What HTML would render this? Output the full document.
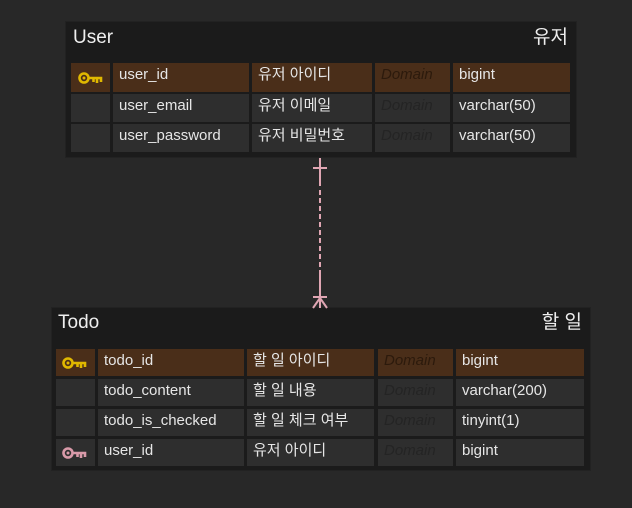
<!DOCTYPE html>
<html><head><meta charset="utf-8"><style>
body{margin:0;width:632px;height:508px;background:#282828;position:relative;overflow:hidden;font-family:"Liberation Sans","Noto Sans CJK KR",sans-serif;color:#e6e6e6}
.t{position:absolute;background:#1b1b1b;box-shadow:0 0 0 1px #222}
.h{position:absolute;font-size:19px;line-height:22px;color:#eee}
.c{position:absolute;background:#2e2e2e;font-size:15px;line-height:24px;padding-left:6px;box-sizing:border-box;white-space:nowrap;overflow:hidden}
.pk{background:#4a2e19}
.d{color:#242424;font-style:italic}
.pk.d{color:#2c1a0c}
</style></head><body>
<div class="t" style="left:66px;top:22px;width:510px;height:135px">
<div class="h" style="left:7px;top:5px">User</div>
<div class="h" style="right:8px;top:5px">유저</div>
</div>
<div class="t" style="left:52px;top:308px;width:538px;height:162px">
<div class="h" style="left:6px;top:4px">Todo</div>
<div class="h" style="right:8px;top:4px">할 일</div>
</div>
<svg style="position:absolute;left:0;top:0" width="632" height="508">
<g stroke="#e0a6b3" stroke-width="2" fill="none">
<line x1="320" y1="158" x2="320" y2="186"/>
<line x1="313" y1="168" x2="327" y2="168"/>
<line x1="320" y1="190" x2="320" y2="272" stroke-dasharray="5,3"/>
<line x1="320" y1="272" x2="320" y2="308"/>
<line x1="313" y1="297" x2="327" y2="297"/>
<line x1="320" y1="298" x2="313" y2="308"/><line x1="320" y1="298" x2="327" y2="308"/>
</g>
</svg>
<div class="c pk" style="left:71px;top:63px;width:39px;height:29px"></div>
<div class="c pk" style="left:113px;top:63px;width:136px;height:29px">user_id</div>
<div class="c pk" style="left:252px;top:63px;width:120px;height:29px">유저 아이디</div>
<div class="c pk d" style="left:375px;top:63px;width:75px;height:29px">Domain</div>
<div class="c pk" style="left:453px;top:63px;width:117px;height:29px">bigint</div>
<div class="c" style="left:71px;top:94px;width:39px;height:28px"></div>
<div class="c" style="left:113px;top:94px;width:136px;height:28px">user_email</div>
<div class="c" style="left:252px;top:94px;width:120px;height:28px">유저 이메일</div>
<div class="c d" style="left:375px;top:94px;width:75px;height:28px">Domain</div>
<div class="c" style="left:453px;top:94px;width:117px;height:28px">varchar(50)</div>
<div class="c" style="left:71px;top:124px;width:39px;height:28px"></div>
<div class="c" style="left:113px;top:124px;width:136px;height:28px">user_password</div>
<div class="c" style="left:252px;top:124px;width:120px;height:28px">유저 비밀번호</div>
<div class="c d" style="left:375px;top:124px;width:75px;height:28px">Domain</div>
<div class="c" style="left:453px;top:124px;width:117px;height:28px">varchar(50)</div>
<div class="c pk" style="left:56px;top:349px;width:39px;height:27px"></div>
<div class="c pk" style="left:98px;top:349px;width:146px;height:27px">todo_id</div>
<div class="c pk" style="left:247px;top:349px;width:127px;height:27px">할 일 아이디</div>
<div class="c pk d" style="left:378px;top:349px;width:75px;height:27px">Domain</div>
<div class="c pk" style="left:456px;top:349px;width:128px;height:27px">bigint</div>
<div class="c" style="left:56px;top:379px;width:39px;height:27px"></div>
<div class="c" style="left:98px;top:379px;width:146px;height:27px">todo_content</div>
<div class="c" style="left:247px;top:379px;width:127px;height:27px">할 일 내용</div>
<div class="c d" style="left:378px;top:379px;width:75px;height:27px">Domain</div>
<div class="c" style="left:456px;top:379px;width:128px;height:27px">varchar(200)</div>
<div class="c" style="left:56px;top:409px;width:39px;height:27px"></div>
<div class="c" style="left:98px;top:409px;width:146px;height:27px">todo_is_checked</div>
<div class="c" style="left:247px;top:409px;width:127px;height:27px">할 일 체크 여부</div>
<div class="c d" style="left:378px;top:409px;width:75px;height:27px">Domain</div>
<div class="c" style="left:456px;top:409px;width:128px;height:27px">tinyint(1)</div>
<div class="c" style="left:56px;top:439px;width:39px;height:27px"></div>
<div class="c" style="left:98px;top:439px;width:146px;height:27px">user_id</div>
<div class="c" style="left:247px;top:439px;width:127px;height:27px">유저 아이디</div>
<div class="c d" style="left:378px;top:439px;width:75px;height:27px">Domain</div>
<div class="c" style="left:456px;top:439px;width:128px;height:27px">bigint</div>
<svg style="position:absolute;left:0;top:0" width="632" height="508">
<defs><g id="k"><circle cx="6" cy="6" r="4.5" stroke-width="2.6" fill="none"/><circle cx="6" cy="6" r="1.5" stroke="none"/><path d="M11 6H23V10M19 6V11M15.5 6V10" stroke-width="2.6" fill="none"/></g></defs>
<g stroke="#e0b800" fill="#e0b800"><use href="#k" x="78" y="72"/><use href="#k" x="62" y="357"/></g>
<g stroke="#d99aa9" fill="#d99aa9"><use href="#k" x="62" y="447"/></g>
</svg>
</body></html>
